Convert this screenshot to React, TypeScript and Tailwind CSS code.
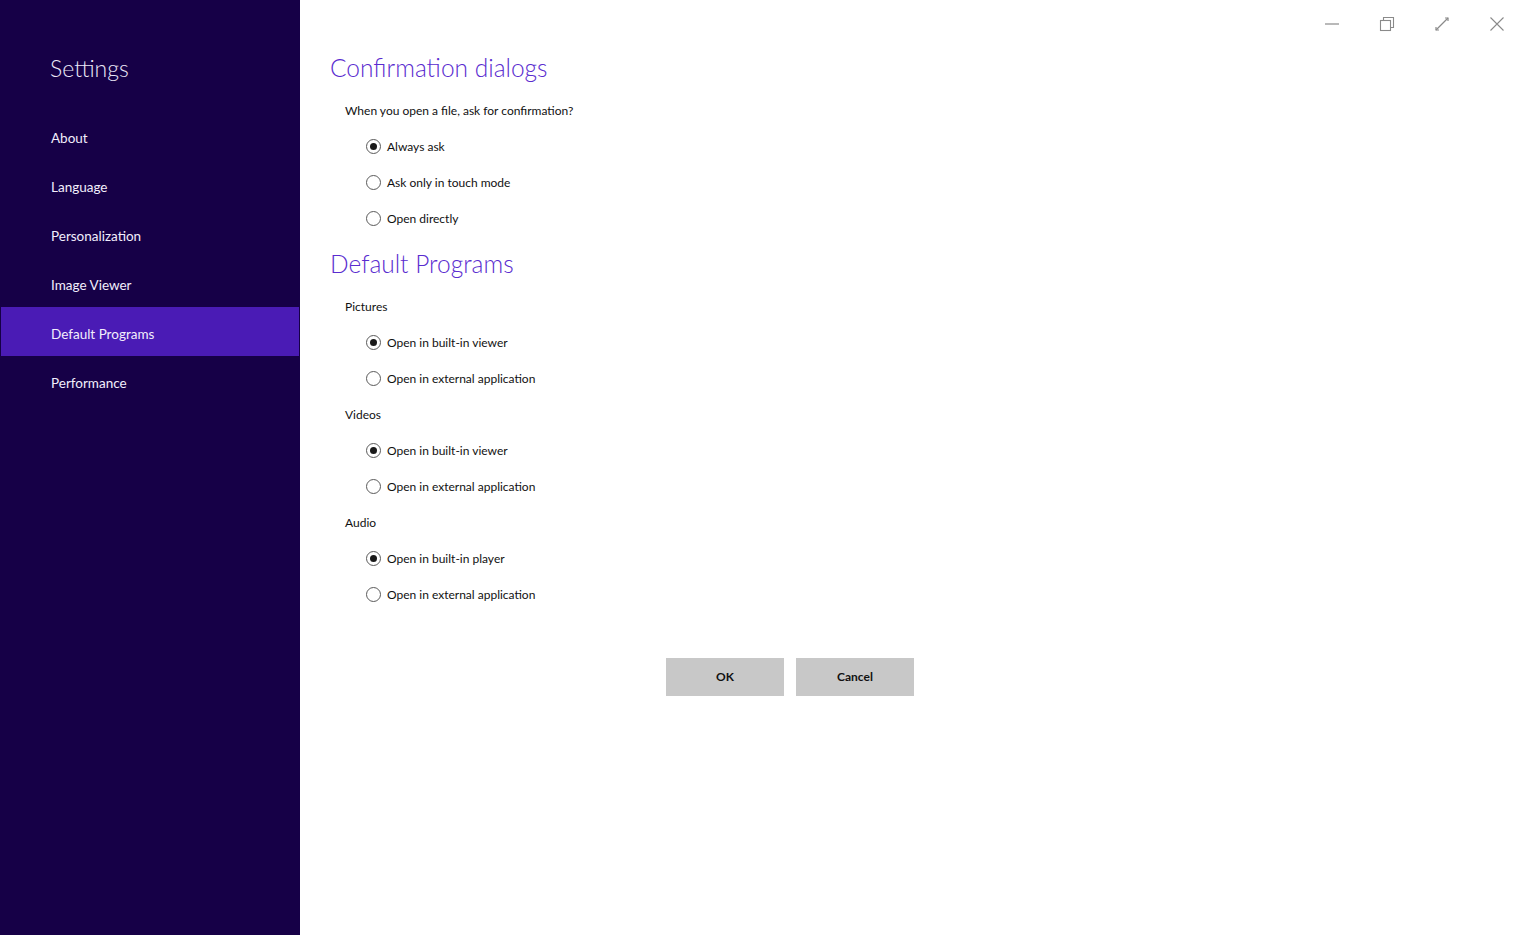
import React from "react";

const navItems = [
  "About",
  "Language",
  "Personalization",
  "Image Viewer",
  "Default Programs",
  "Performance",
];

const Radio: React.FC<{ label: string; checked?: boolean }> = ({ label, checked }) => (
  <div className="flex h-9 items-center pl-[36px] pt-[1px]">
    <span className="flex h-[15px] w-[15px] items-center justify-center rounded-full border border-[#5a5a5a] bg-white">
      {checked && <span className="h-[7px] w-[7px] rounded-full bg-[#1a1a1a]" />}
    </span>
    <span className="ml-[6px] text-[12px] text-[#111]">{label}</span>
  </div>
);

const Label: React.FC<{ text: string }> = ({ text }) => (
  <div className="flex h-9 items-center pl-[15px] pt-[1px] text-[12px] text-[#111]">{text}</div>
);

const Heading: React.FC<{ text: string }> = ({ text }) => (
  <h2 className="flex h-10 items-center text-[24.5px] font-light text-[#5a2ccf]">{text}</h2>
);

const WindowControls: React.FC = () => (
  <div className="absolute right-0 top-0 flex h-12 items-center pr-[1px] text-[#8a8a8a]">
    <button className="flex h-12 w-[55px] items-center justify-center">
      <svg width="16" height="16" viewBox="0 0 16 16" fill="none" stroke="currentColor" strokeWidth="1.2">
        <path d="M1 8h14" />
      </svg>
    </button>
    <button className="flex h-12 w-[55px] items-center justify-center">
      <svg width="16" height="16" viewBox="0 0 16 16" fill="none" stroke="currentColor" strokeWidth="1.1">
        <rect x="1.5" y="4.5" width="10" height="10" />
        <path d="M4.5 4.5V1.5h10v10h-3" />
      </svg>
    </button>
    <button className="flex h-12 w-[55px] items-center justify-center">
      <svg width="16" height="16" viewBox="0 0 16 16" fill="none" stroke="currentColor" strokeWidth="1.2">
        <path d="M2 14L14 2" />
        <path d="M2 11v3h3" />
        <path d="M11 2h3v3" />
      </svg>
    </button>
    <button className="flex h-12 w-[55px] items-center justify-center">
      <svg width="16" height="16" viewBox="0 0 16 16" fill="none" stroke="currentColor" strokeWidth="1.1">
        <path d="M1.5 1.5l13 13M14.5 1.5l-13 13" />
      </svg>
    </button>
  </div>
);

export default function App() {
  return (
    <div
      className="relative flex h-[935px] w-full overflow-hidden bg-white"
      style={{ fontFamily: 'Lato, "Noto Sans", sans-serif' }}
    >
      <aside className="flex w-[300px] shrink-0 flex-col bg-[#160047]">
        <div className="flex h-[111px] items-start pl-[50px] pt-[50px]">
          <h1 className="text-[23px] font-light leading-[36px] text-[#ece8f8]">Settings</h1>
        </div>
        <nav className="flex flex-col">
          {navItems.map((item) => (
            <div
              key={item}
              className={
                item === "Default Programs"
                  ? "ml-[1px] flex h-[49px] w-[298px] items-center pl-[50px] pt-[5px] text-[13.5px] text-[#f2eefc] bg-[#4a1bb5]"
                  : "flex h-[49px] items-center pl-[51px] pt-[5px] text-[13.5px] text-[#f2eefc]"
              }
            >
              {item}
            </div>
          ))}
        </nav>
      </aside>

      <main className="flex-1 pl-[30px] pt-[48px]">
        <Heading text="Confirmation dialogs" />
        <div className="mt-1">
          <Label text="When you open a file, ask for confirmation?" />
          <Radio label="Always ask" checked />
          <Radio label="Ask only in touch mode" />
          <Radio label="Open directly" />
        </div>

        <div className="mt-2">
          <Heading text="Default Programs" />
        </div>
        <div className="mt-1">
          <Label text="Pictures" />
          <Radio label="Open in built-in viewer" checked />
          <Radio label="Open in external application" />
          <Label text="Videos" />
          <Radio label="Open in built-in viewer" checked />
          <Radio label="Open in external application" />
          <Label text="Audio" />
          <Radio label="Open in built-in player" checked />
          <Radio label="Open in external application" />
        </div>

        <div className="ml-[336px] mt-[46px] flex gap-3">
          <button className="h-[38px] w-[118px] bg-[#c8c8c8] text-[12px] font-bold text-[#111]">OK</button>
          <button className="h-[38px] w-[118px] bg-[#c8c8c8] text-[12px] font-bold text-[#111]">Cancel</button>
        </div>
      </main>

      <WindowControls />
    </div>
  );
}
